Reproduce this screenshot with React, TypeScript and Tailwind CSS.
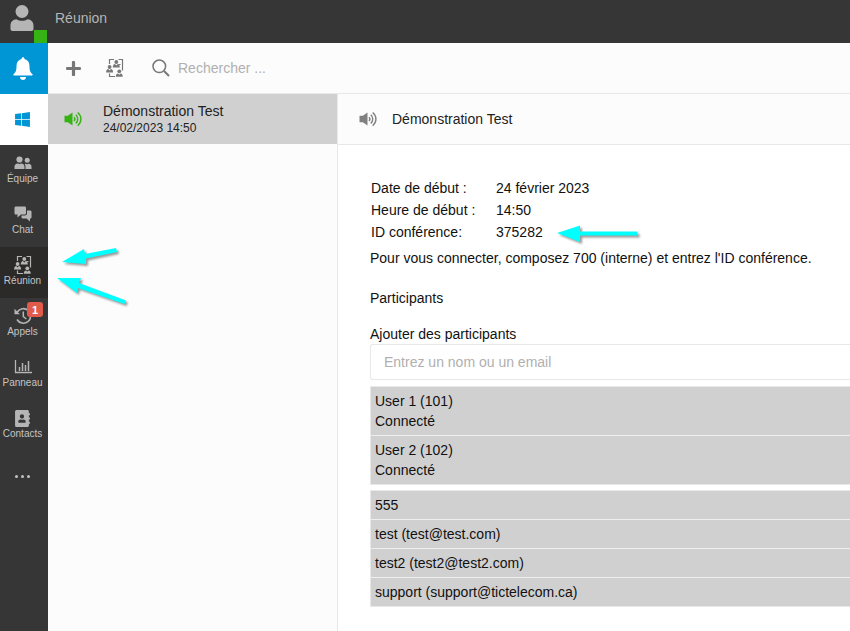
import type { ReactNode } from "react";
import { FaAddressBook, FaPlus, FaWindows } from "react-icons/fa";

const connected = [
  { name: "User 1 (101)", status: "Connecté" },
  { name: "User 2 (102)", status: "Connecté" },
];

const invited = ["555", "test (test@test.com)", "test2 (test2@test2.com)", "support (support@tictelecom.ca)"];

const details = [
  ["Date de début :", "24 février 2023"],
  ["Heure de début :", "14:50"],
  ["ID conférence:", "375282"],
];

const UserIcon = () => (
  <svg viewBox="0 0 24 26" className="h-[26px] w-6" fill="currentColor">
    <circle cx="12" cy="6.500" r="6.500" />
    <path d="M.5 24v-3.500C.5 17 2.800 14.500 6.500 14.200c1.500 1 3.500 1.500 5.500 1.500s4-.5 5.500-1.500c3.700.3 6 2.800 6 6.300V24c0 1.200-.8 2-2 2h-19c-1.200 0-2-.8-2-2z" />
  </svg>
);

const BellIcon = () => (
  <svg viewBox="0 0 22 24" className="h-6 w-[22px]" fill="currentColor">
    <path d="M9.500 2c0-2.300 3-2.300 3 0 3.300.7 5 3.400 5 7.300 0 4.500 1 6.200 2.800 7.700.8.700.3 1.500-.8 1.500H2.500c-1.100 0-1.600-.8-.8-1.500 1.800-1.500 2.800-3.200 2.800-7.700 0-3.900 1.700-6.600 5-7.300z" />
    <path d="M8 20h6c0 1.700-1.300 3-3 3s-3-1.300-3-3z" />
  </svg>
);

const TeamIcon = () => (
  <svg viewBox="0 0 18 14" className="h-3.5 w-[18px]" fill="currentColor">
    <circle cx="5.500" cy="3.500" r="3.100" />
    <circle cx="13.200" cy="4.200" r="2.500" />
    <path d="M.5 13v-2.200c0-2 1.200-3 3-3.200 1.200.6 2.800.6 4 0 1.800.2 3 1.200 3 3.200V13z" />
    <path d="M11.500 13v-2.200c0-1.200-.3-2-.8-2.700l1-.3c1 .5 2 .5 3 0 1.800.2 2.800 1.200 2.800 3V13z" />
  </svg>
);

const ChatIcon = () => (
  <svg viewBox="0 0 18 16" className="h-4 w-[18px]" fill="currentColor">
    <path d="M2 .5h8.500c1 0 1.500.5 1.500 1.500v5c0 1-.5 1.500-1.500 1.500H7L3.500 11.500v-3H2C1 8.500.5 8 .5 7V2C.5 1 1 .5 2 .5z" />
    <path d="M13 4.500h3c1 0 1.500.5 1.500 1.500v5c0 1-.5 1.500-1.500 1.500v3l-3.500-3H9C8 12.500 7.500 12 7.500 11V9.500h3.300c1.400 0 2.200-.8 2.200-2.200z" />
  </svg>
);

const MeetingIcon = () => (
  <svg viewBox="0 0 18 18" className="size-[18px]">
    <path
      d="M3.500 5V.5H8M12.500.5h4v11M3.500 14.500v3H9M12.500 5.500h2"
      fill="none"
      stroke="currentColor"
      strokeWidth="1.200"
    />
    <g fill="currentColor">
      <circle cx="10.300" cy="3" r="1.900" />
      <path d="M6.800 8.500c0-2 .8-3.200 2.200-3.400l1.300 1.400 1.300-1.400c1.400.2 2.200 1.400 2.200 3.400z" />
      <circle cx="3.600" cy="8" r="1.900" />
      <path d="M.1 13.500c0-2 .8-3.200 2.200-3.400l1.300 1.400 1.300-1.400c1.400.2 2.200 1.400 2.200 3.400z" />
      <circle cx="13.300" cy="12.300" r="1.900" />
      <path d="M9.800 17.800c0-2 .8-3.200 2.200-3.400l1.300 1.400 1.300-1.400c1.400.2 2.200 1.400 2.200 3.400z" />
    </g>
  </svg>
);

const HistoryIcon = () => (
  <svg viewBox="0 0 18 18" className="size-[18px]" fill="none" stroke="currentColor">
    <path d="M3.200 5A7.300 7.300 0 1 1 3 12.500" strokeWidth="1.600" />
    <path d="M9.300 4.500v5l3 2.500" strokeWidth="1.500" />
    <path d="M.5 1.800v5.400h5.400z" fill="currentColor" stroke="none" />
  </svg>
);

const ChartIcon = () => (
  <svg viewBox="0 0 18 14" className="h-3.5 w-[18px]" fill="none" stroke="currentColor">
    <path d="M1.500 0v12.500H18" strokeWidth="1.300" />
    <path d="M5.500 7v4M8.500 3v8M11.500 5v6M14.500 1v10" strokeWidth="1.500" />
  </svg>
);

const SpeakerIcon = () => (
  <svg viewBox="0 0 18 16" className="h-4 w-[18px]">
    <path d="M.5 4.800h3.300L8.500 1.500v13l-4.700-3.300H.5z" fill="currentColor" />
    <path
      d="M10 6.200c1 1 1 2.800 0 3.800M11.800 3.800c2.600 2.200 2.600 6.400 0 8.600M13.700 1.500c4.300 3.600 4.300 9.600 0 13.200"
      fill="none"
      stroke="currentColor"
      strokeWidth="1.400"
    />
  </svg>
);

const SearchIcon = () => (
  <svg viewBox="0 0 18 18" className="size-[18px]" fill="none" stroke="currentColor">
    <circle cx="7.300" cy="7.300" r="6.300" strokeWidth="1.500" />
    <path d="M12 12l5 5" strokeWidth="2" />
  </svg>
);

type NavItemProps = { label: string; icon: ReactNode; active?: boolean; badge?: number };

const NavItem = ({ label, icon, active, badge }: NavItemProps) => (
  <button
    className={`relative flex h-[51px] w-full flex-col items-center pt-2 pr-[3px] text-[10px] leading-3 text-[#c4c4c4] ${active ? "bg-[#2b2a29]" : ""}`}
  >
    <span className="flex h-5 items-center text-[#b5b5b5]">{icon}</span>
    {label}
    {badge && (
      <span className="absolute top-1 right-[5px] flex h-[15px] w-4 items-center justify-center rounded-[3px] bg-[#e25b4a] text-[11px] font-bold text-white">
        {badge}
      </span>
    )}
  </button>
);

const Sidebar = () => (
  <nav className="flex w-12 shrink-0 flex-col bg-[#363636]">
    <button aria-label="Notifications" className="flex h-[51px] items-center justify-center bg-[#0096d6] pr-[3px] text-white">
      <BellIcon />
    </button>
    <button aria-label="Windows" className="flex h-[51px] items-center justify-center bg-white pr-[3px] text-[#0096d6]">
      <FaWindows size={17} />
    </button>
    <NavItem label="Équipe" icon={<TeamIcon />} />
    <NavItem label="Chat" icon={<ChatIcon />} />
    <NavItem label="Réunion" icon={<MeetingIcon />} active />
    <NavItem label="Appels" icon={<HistoryIcon />} badge={1} />
    <NavItem label="Panneau" icon={<ChartIcon />} />
    <NavItem label="Contacts" icon={<FaAddressBook size={17} />} />
    <button aria-label="Plus" className="flex h-[51px] items-center justify-center gap-[3px] pr-[3px]">
      <i className="size-[3px] rounded-full bg-[#c4c4c4]" />
      <i className="size-[3px] rounded-full bg-[#c4c4c4]" />
      <i className="size-[3px] rounded-full bg-[#c4c4c4]" />
    </button>
  </nav>
);

// annotation arrows drawn over the page
const Arrows = () => (
  <svg
    className="pointer-events-none absolute top-0 left-0 h-[320px] w-[660px] drop-shadow-[2px_2px_1px_rgba(0,0,0,0.4)]"
    fill="#00ffff"
  >
    <path d="M62 262L84 249L85 254L116 248L117 252L86 258.500L86 264Z" />
    <path d="M57 278L81 278L79 283L126 300.500L124.500 304L78 288L77 293Z" />
    <path d="M557 233L580 225.500V231.500H637L638 235.500H580V242Z" />
  </svg>
);

const App = () => (
  <div className="relative flex min-h-screen flex-col overflow-hidden bg-white font-['Liberation_Sans',Arial,sans-serif] text-sm text-[#222]">
    <header className="flex h-[43px] shrink-0 bg-[#363636] text-[#b5b5b5]">
      <button aria-label="Profil" className="relative flex w-12 justify-center pt-[5px] pr-1">
        <UserIcon />
        <span className="absolute right-px bottom-0 size-[13px] bg-[#37b214]" />
      </button>
      <h1 className="pt-2 pl-[7px]">Réunion</h1>
    </header>

    <div className="flex flex-1">
      <Sidebar />
      <div className="flex min-w-0 flex-1 flex-col">
        <div className="flex h-[51px] items-center border-b border-[#e8e8e8] bg-[#fcfcfc] pl-[17px] text-[#777]">
          <button aria-label="Ajouter">
            <FaPlus size={17} />
          </button>
          <button aria-label="Nouvelle réunion" className="ml-6">
            <MeetingIcon />
          </button>
          <label htmlFor="search" aria-label="Rechercher" className="ml-7">
            <SearchIcon />
          </label>
          <input
            id="search"
            type="text"
            placeholder="Rechercher ..."
            className="ml-2 min-w-0 flex-1 outline-none placeholder:text-[#b0b0b0]"
          />
        </div>

        <div className="flex flex-1">
          <aside className="w-[290px] shrink-0 border-r border-[#e8e8e8] bg-[#fcfcfc]">
            <button className="flex h-[50px] w-full items-center bg-[#d0d0d0] pl-4 text-left">
              <span className="text-[#37b214]">
                <SpeakerIcon />
              </span>
              <span className="ml-[21px]">
                <span className="block leading-[18px]">Démonstration Test</span>
                <span className="block text-xs">24/02/2023 14:50</span>
              </span>
            </button>
          </aside>

          <main className="min-w-0 flex-1">
            <div className="flex h-[51px] items-center border-b border-[#e8e8e8] bg-[#fcfcfc] pl-[21px]">
              <span className="text-[#808080]">
                <SpeakerIcon />
              </span>
              <h2 className="ml-[15px]">Démonstration Test</h2>
            </div>

            <div className="pt-8 pl-8 text-[#111]">
              <dl className="grid grid-cols-[125px_1fr] pl-px leading-[22px]">
                {details.map(([term, value]) => (
                  <div key={term} className="contents">
                    <dt>{term}</dt>
                    <dd>{value}</dd>
                  </div>
                ))}
              </dl>
              <p className="mt-[5px]">Pour vous connecter, composez 700 (interne) et entrez l'ID conférence.</p>
              <h3 className="mt-5">Participants</h3>
              <label htmlFor="participant" className="mt-4 block">
                Ajouter des participants
              </label>
              <input
                id="participant"
                type="text"
                placeholder="Entrez un nom ou un email"
                className="block h-9 w-full rounded-l-[3px] border border-r-0 border-[#e8e8e8] px-[13px] outline-none placeholder:text-[#b0b0b0]"
              />

              <ul className="mt-1.5 divide-y divide-[#efefef] border border-r-0 border-[#e8e8e8] bg-[#d0d0d0]">
                {connected.map((user) => (
                  <li key={user.name} className="p-1">
                    <p>{user.name}</p>
                    <p>{user.status}</p>
                  </li>
                ))}
              </ul>
              <ul className="mt-[5px] divide-y divide-[#efefef] border border-r-0 border-[#e8e8e8] bg-[#d0d0d0]">
                {invited.map((name) => (
                  <li key={name} className="p-1">
                    {name}
                  </li>
                ))}
              </ul>
            </div>
          </main>
        </div>
      </div>
    </div>
    <Arrows />
  </div>
);

export default App;
